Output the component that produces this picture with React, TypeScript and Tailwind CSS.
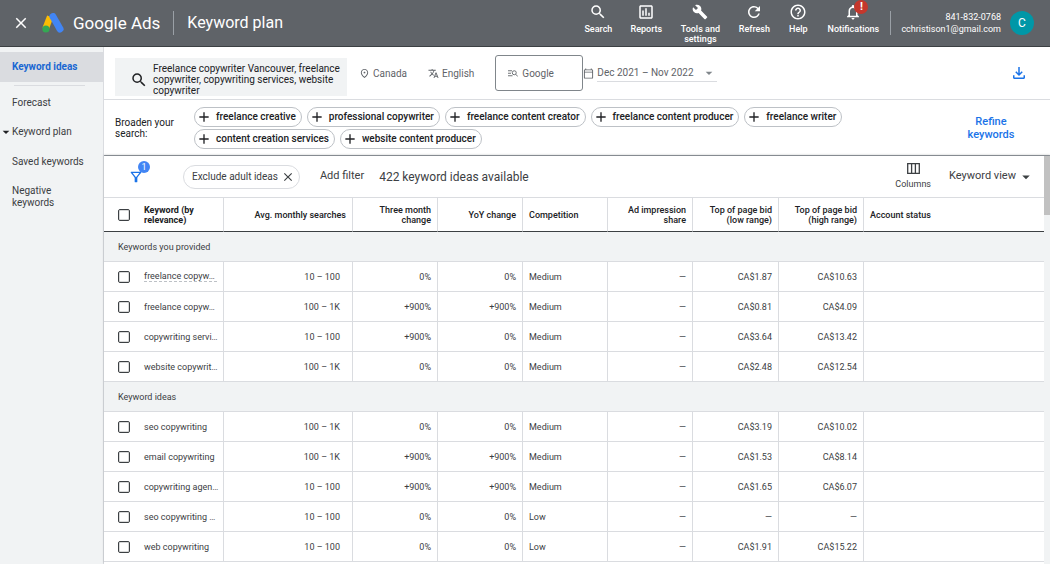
import React from "react"
import {
    MdAdd,
    MdArrowDropDown,
    MdBuild,
    MdClose,
    MdHelpOutline,
    MdNotificationsNone,
    MdOutlineAssessment,
    MdOutlineCalendarToday,
    MdOutlineFileDownload,
    MdOutlineFilterAlt,
    MdOutlinePlace,
    MdRefresh,
    MdSearch,
    MdTranslate,
} from "react-icons/md"

interface ToolLinkProps {
    icon: React.ReactNode,
    label: string,
    width: string,
    alert?: boolean,
}

interface Keyword {
    name: string,
    searches: string,
    threeMonth: string,
    yoy: string,
    competition: string,
    low: string,
    high: string,
    dashed?: boolean,
}

interface KeywordGroup {
    title: string,
    rows: Keyword[],
}

const suggestions = [
    "freelance creative",
    "professional copywriter",
    "freelance content creator",
    "freelance content producer",
    "freelance writer",
    "content creation services",
    "website content producer",
]

const groups: KeywordGroup[] = [
    {
        title: "Keywords you provided",
        rows: [
            { name: "freelance copyw…", searches: "10 – 100", threeMonth: "0%", yoy: "0%", competition: "Medium", low: "CA$1.87", high: "CA$10.63", dashed: true },
            { name: "freelance copyw…", searches: "100 – 1K", threeMonth: "+900%", yoy: "+900%", competition: "Medium", low: "CA$0.81", high: "CA$4.09" },
            { name: "copywriting servi…", searches: "10 – 100", threeMonth: "+900%", yoy: "0%", competition: "Medium", low: "CA$3.64", high: "CA$13.42" },
            { name: "website copywrit…", searches: "100 – 1K", threeMonth: "0%", yoy: "0%", competition: "Medium", low: "CA$2.48", high: "CA$12.54" },
        ],
    },
    {
        title: "Keyword ideas",
        rows: [
            { name: "seo copywriting", searches: "100 – 1K", threeMonth: "0%", yoy: "0%", competition: "Medium", low: "CA$3.19", high: "CA$10.02" },
            { name: "email copywriting", searches: "100 – 1K", threeMonth: "+900%", yoy: "+900%", competition: "Medium", low: "CA$1.53", high: "CA$8.14" },
            { name: "copywriting agen…", searches: "10 – 100", threeMonth: "+900%", yoy: "+900%", competition: "Medium", low: "CA$1.65", high: "CA$6.07" },
            { name: "seo copywriting …", searches: "10 – 100", threeMonth: "0%", yoy: "0%", competition: "Low", low: "—", high: "—" },
            { name: "web copywriting", searches: "10 – 100", threeMonth: "0%", yoy: "0%", competition: "Low", low: "CA$1.91", high: "CA$15.22" },
        ],
    },
]

const AdsLogo = () => (
    <svg viewBox="0 0 22 20" className="w-[22px] h-5">
        <path d="M8.2 3.6 3.6 15.6" stroke="#fbbc04" strokeWidth="6.6" />
        <path d="M11 3.6 18 16" stroke="#4285f4" strokeWidth="7" strokeLinecap="round" />
        <circle cx="3.9" cy="16" r="3.6" fill="#34a853" />
    </svg>
)

const NetworkIcon = () => (
    <svg viewBox="0 0 20 14" className="w-[10px] h-[7px]" fill="none" stroke="currentColor" strokeWidth="1.8">
        <path d="M0 1.5h8M0 6.5h6M0 11.5h9" />
        <circle cx="12.5" cy="5.5" r="4" />
        <path d="m15.5 8.5 4 4.5" />
    </svg>
)

const ColumnsIcon = () => (
    <svg viewBox="0 0 13 11" className="w-[13px] h-[11px]" fill="none" stroke="currentColor" strokeWidth="1.3">
        <path d="M.7.7h11.6v9.6H.7zM4.6.7v9.6M8.4.7v9.6" />
    </svg>
)

const ToolLink: React.FC<ToolLinkProps> = (props) => {
    return (
        <button className={`relative flex flex-col items-center gap-[3px] font-medium text-[9px] leading-[10px] ${props.width}`}>
            {props.icon}
            <span>{props.label}</span>
            {props.alert &&
                <span className="absolute -top-[3px] right-3 size-[14px] rounded-full bg-[#c5372c] text-[11px] leading-[14px] font-bold">!</span>}
        </button>
    )
}

const Checkbox: React.FC<{ label: string }> = ({ label }) => (
    <input type="checkbox" aria-label={label} className="block ml-[14px] size-3 appearance-none rounded-[2px] border border-[#3c4043] outline outline-[#3c4043]/20 -outline-offset-2 checked:bg-[#1a73e8]" />
)

const Header = () => (
    <header className="flex items-center shrink-0 h-[47px] bg-[#5f6368] border-b border-[#3c4043] text-white">
        <button aria-label="Close" className="ml-3"><MdClose className="size-[18px]" /></button>
        <div className="flex items-center ml-3">
            <AdsLogo />
            <span className="ml-[9px] text-[17px] leading-5">Google Ads</span>
        </div>
        <div className="ml-[13px] h-6 w-px bg-[#9aa0a6]"></div>
        <h1 className="ml-[13px] text-base">Keyword plan</h1>
        <nav className="flex self-stretch items-start gap-4 ml-auto pt-[3px]">
            <ToolLink icon={<MdSearch className="size-[18px]" />} label="Search" width="w-8" />
            <ToolLink icon={<MdOutlineAssessment className="size-[18px]" />} label="Reports" width="w-8" />
            <ToolLink icon={<MdBuild className="size-4 my-px" />} label="Tools and settings" width="w-11" />
            <ToolLink icon={<MdRefresh className="size-[18px]" />} label="Refresh" width="w-8" />
            <ToolLink icon={<MdHelpOutline className="size-[18px]" />} label="Help" width="w-6" />
            <ToolLink icon={<MdNotificationsNone className="size-[18px]" />} label="Notifications" width="w-[54px]" alert />
        </nav>
        <div className="ml-[10px] h-6 w-px bg-[#9aa0a6]"></div>
        <div className="ml-[10px] text-right text-[9px] leading-3">
            <p>841-832-0768</p>
            <p>cchristison1@gmail.com</p>
        </div>
        <button className="ml-[9px] mr-4 size-6 rounded-full bg-[#0097a7] text-xs">C</button>
    </header>
)

const Sidebar = () => (
    <nav className="flex flex-col shrink-0 w-[104px] pt-[5px] bg-[#f1f3f4] border-r border-[#dadce0] text-[10px] leading-3 text-[#3c4043]">
        <a href="#ideas" className="flex items-center h-[30px] pl-3 bg-[#dadce0] font-bold text-[#1967d2]">Keyword ideas</a>
        <div className="mt-[3px] ml-[14px] mr-[18px] h-px bg-[#dadce0]"></div>
        <a href="#forecast" className="mt-[11px] pl-3">Forecast</a>
        <a href="#plan" className="flex items-center mt-[17px] h-3">
            <MdArrowDropDown className="size-4 -mx-0.5 text-[#202124]" />Keyword plan
        </a>
        <a href="#saved" className="mt-[18px] pl-3">Saved keywords</a>
        <a href="#negative" className="mt-[17px] pl-3 pr-8">Negative keywords</a>
    </nav>
)

const SearchBar = () => (
    <div className="flex items-center h-[53px] pl-[11px] border-b border-[#dadce0] text-[10px] text-[#5f6368]">
        <label className="flex items-start self-end mb-[3px] h-[38px] w-[232px] pl-[15px] pt-[5px] bg-[#f1f3f4] text-[#202124]">
            <MdSearch className="size-[18px] mt-2 shrink-0" />
            <textarea
                aria-label="Keywords"
                rows={3}
                className="ml-[5px] w-[188px] h-[33px] resize-none overflow-hidden leading-[11px]"
                defaultValue="Freelance copywriter Vancouver, freelance copywriter, copywriting services, website copywriter"
            />
        </label>
        <button className="flex items-center gap-[3px] ml-3"><MdOutlinePlace className="size-[11px]" />Canada</button>
        <button className="flex items-center gap-[3px] ml-[21px]"><MdTranslate className="size-[11px]" />English</button>
        <button className="flex items-center gap-1 ml-[21px] pl-3 h-9 w-[88px] rounded-[3px] border border-[#80868b]">
            <NetworkIcon />Google
        </button>
        <label className="relative flex items-center">
            <MdOutlineCalendarToday className="size-[11px]" />
            <select aria-label="Date range" className="ml-[3px] h-[18px] w-[120px] appearance-none border-b border-[#dadce0]">
                <option>Dec 2021 – Nov 2022</option>
            </select>
            <MdArrowDropDown className="absolute right-0 size-4 pointer-events-none text-[#80868b]" />
        </label>
        <button aria-label="Download" className="ml-auto mr-[22px] text-[#1a73e8]"><MdOutlineFileDownload className="size-[18px]" /></button>
    </div>
)

const Broaden = () => (
    <div className="flex items-center min-h-14 pl-[11px] border-b border-[#9aa0a6]">
        <p className="w-[79px] shrink-0 pr-4 text-[10px] leading-[11px] text-[#202124]">Broaden your search:</p>
        <div className="flex flex-wrap flex-1 gap-x-[5px] gap-y-[2px]">
            {suggestions.map((item) => (
                <button key={item} className="flex items-center gap-1 h-5 pl-px pr-[5px] rounded-full border border-[#bdc1c6] text-[10px] font-medium text-[#202124]">
                    <MdAdd className="size-4" />{item}
                </button>
            ))}
        </div>
        <a href="#refine" className="w-[80px] mr-[19px] px-3 text-center text-[11px] leading-[13px] font-medium text-[#1a73e8]">Refine keywords</a>
    </div>
)

const Toolbar = () => (
    <div className="flex items-center h-[42px] border-b border-[#dadce0] text-[11px] text-[#3c4043]">
        <button aria-label="Filters" className="relative ml-6 text-[#1a73e8]">
            <MdOutlineFilterAlt className="size-4" />
            <span className="absolute -top-2 left-[10px] size-3 rounded-full bg-[#4285f4] text-white text-[9px] leading-3">1</span>
        </button>
        <button className="flex items-center gap-[3px] ml-[39px] h-6 pl-2 pr-1 rounded-full border border-[#dadce0] text-[10px]">
            Exclude adult ideas<MdClose className="size-[14px]" />
        </button>
        <button className="ml-5">Add filter</button>
        <h2 className="ml-[15px] text-xs">422 keyword ideas available</h2>
        <button className="flex flex-col items-center gap-1 ml-auto text-[9px] leading-3">
            <ColumnsIcon />Columns
        </button>
        <label className="relative flex items-center ml-[18px] mr-3">
            <select aria-label="View" className="w-[83px] appearance-none">
                <option>Keyword view</option>
            </select>
            <MdArrowDropDown className="absolute -right-[3px] size-[18px] pointer-events-none" />
        </label>
    </div>
)

const num = "px-[6px] text-right border-r border-b border-[#dadce0]"
const text = "px-[6px] text-left border-r border-b border-[#dadce0]"
const head = "px-[6px] font-medium border-r border-r-[#dadce0] border-b border-b-[#3c4043]"

const KeywordTable = () => (
    <table className="w-full table-fixed border-separate border-spacing-0 text-[9px] leading-[10px] text-[#3c4043]">
        <colgroup>
            <col className="w-10" />
            <col className="w-20" />
            <col className="w-[129px]" />
            <col className="w-[85px]" />
            <col className="w-[85px]" />
            <col className="w-[85px]" />
            <col className="w-[85px]" />
            <col className="w-[86px]" />
            <col className="w-[85px]" />
            <col />
        </colgroup>
        <thead>
            <tr className="h-[34px] text-[#202124]">
                <th className="border-b border-[#3c4043]"><Checkbox label="Select all keywords" /></th>
                <th className="text-left font-bold border-r border-r-[#dadce0] border-b border-b-[#3c4043]">Keyword (by relevance)</th>
                <th className={`${head} text-right`}>Avg. monthly searches</th>
                <th className={`${head} text-right`}>Three month change</th>
                <th className={`${head} text-right`}>YoY change</th>
                <th className={`${head} text-left`}>Competition</th>
                <th className={`${head} text-right`}>Ad impression share</th>
                <th className={`${head} text-right`}>Top of page bid (low range)</th>
                <th className={`${head} text-right`}>Top of page bid (high range)</th>
                <th className="px-[6px] text-left font-medium border-b border-[#3c4043]">Account status</th>
            </tr>
        </thead>
        {groups.map((group) => (
            <tbody key={group.title}>
                <tr className="h-[30px] bg-[#f1f3f4]">
                    <th colSpan={10} className="pl-[14px] text-left font-normal border-b border-[#dadce0]">{group.title}</th>
                </tr>
                {group.rows.map((row, i) => (
                    <tr key={i} className="h-[30px]">
                        <td className="border-b border-[#dadce0]"><Checkbox label={row.name} /></td>
                        <td className="pr-[6px] border-r border-b border-[#dadce0] whitespace-nowrap">
                            <span className={row.dashed ? "block border-b border-dashed border-[#bdc1c6]" : "block"}>{row.name}</span>
                        </td>
                        <td className="pr-3 text-right border-r border-b border-[#dadce0]">{row.searches}</td>
                        <td className={num}>{row.threeMonth}</td>
                        <td className={num}>{row.yoy}</td>
                        <td className={text}>{row.competition}</td>
                        <td className={num}>—</td>
                        <td className={num}>{row.low}</td>
                        <td className={num}>{row.high}</td>
                        <td className="border-b border-[#dadce0]"></td>
                    </tr>
                ))}
            </tbody>
        ))}
    </table>
)

const App = () => {
    return (
        <div className="flex flex-col h-screen overflow-hidden bg-white font-['Roboto',sans-serif]">
            <Header />
            <div className="flex flex-1 min-h-0">
                <Sidebar />
                <main className="flex flex-col flex-1 min-w-0">
                    <SearchBar />
                    <Broaden />
                    <div className="flex flex-1 min-h-0 shadow-[0_-1px_2px_rgba(60,64,67,0.3)]">
                        <section className="flex-1 min-w-0 overflow-hidden">
                            <Toolbar />
                            <KeywordTable />
                        </section>
                        <div className="w-[6px] bg-[#f1f3f4]">
                            <div className="h-[59px] bg-[#c1c1c1]"></div>
                        </div>
                    </div>
                </main>
            </div>
        </div>
    )
}

export default App
